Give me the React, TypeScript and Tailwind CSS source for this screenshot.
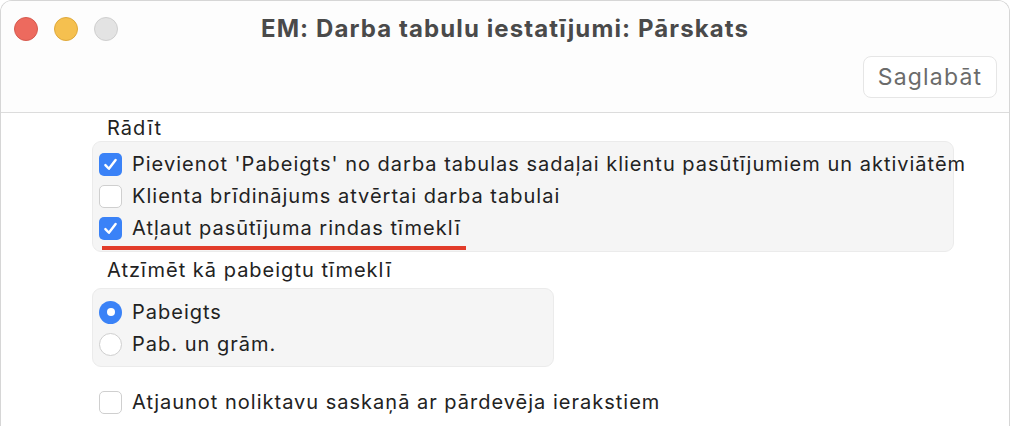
import React from "react";

const Check = ({ checked }: { checked: boolean }) =>
  checked ? (
    <div className="w-[23px] h-[23px] rounded-[5px] bg-[#3a82f7] flex items-center justify-center shrink-0">
      <svg width="17" height="17" viewBox="0 0 16 16" fill="none">
        <path d="M3.2 8.6 L6.5 12 L12.8 3.8" stroke="white" strokeWidth="2.3" strokeLinecap="round" strokeLinejoin="round" />
      </svg>
    </div>
  ) : (
    <div className="w-[23px] h-[23px] rounded-[5px] bg-white border border-[#cfcfcf] shrink-0" />
  );

const Radio = ({ checked }: { checked: boolean }) =>
  checked ? (
    <div className="w-[23px] h-[23px] rounded-full bg-[#3a82f7] flex items-center justify-center shrink-0">
      <div className="w-[8px] h-[8px] rounded-full bg-white" />
    </div>
  ) : (
    <div className="w-[23px] h-[23px] rounded-full bg-white border border-[#cfcfcf] shrink-0" />
  );

const Row = ({ children, control }: { children: React.ReactNode; control: React.ReactNode }) => (
  <div className="h-[32px] flex items-center gap-[10px]">
    {control}
    <span className="whitespace-nowrap">{children}</span>
  </div>
);

export default function App() {
  return (
    <div
      className="w-[1010px] h-[426px] bg-white overflow-hidden rounded-t-[12px] border-t border-l border-r border-[#d6d6d6] text-[#222222]"
      style={{ fontFamily: "Inter, 'Noto Sans', sans-serif" }}
    >
      <div className="h-[112px] bg-[#fdfdfd] border-b border-[#dcdcdc] flex flex-col">
        <div className="h-[55px] flex items-center relative">
          <div className="flex gap-[16px] pl-[13px]">
            <div className="w-[24px] h-[24px] rounded-full bg-[#ed6a5e] border border-[#d65a4f]" />
            <div className="w-[24px] h-[24px] rounded-full bg-[#f5c04f] border border-[#dfa93b]" />
            <div className="w-[24px] h-[24px] rounded-full bg-[#e3e3e3] border border-[#cfcfcf]" />
          </div>
          <div className="absolute inset-0 flex items-center justify-center pointer-events-none">
            <span className="text-[24px] font-bold text-[#4a4a4a] tracking-[1.1px]">EM: Darba tabulu iestatījumi: Pārskats</span>
          </div>
        </div>
        <div className="flex justify-end pr-[12px]">
          <div className="h-[42px] w-[134px] rounded-[8px] border border-[#e6e6e6] bg-white flex items-center justify-center text-[23px] tracking-[1.2px] text-[#6b6b6b]">
            Saglabāt
          </div>
        </div>
      </div>

      <div className="pl-[91px] text-[20px] tracking-[1px] leading-none">
        <div className="pl-[15px] h-[28px] pt-[2px] flex items-center">Rādīt</div>
        <div className="w-[862px] rounded-[9px] bg-[#f5f5f5] border border-[#ebebeb] px-[6px] pt-[6px] pb-[7px] relative">
          <Row control={<Check checked />}>Pievienot 'Pabeigts' no darba tabulas sadaļai klientu pasūtījumiem un aktiviātēm</Row>
          <Row control={<Check checked={false} />}>Klienta brīdinājums atvērtai darba tabulai</Row>
          <Row control={<Check checked />}>Atļaut pasūtījuma rindas tīmeklī</Row>
          <div className="absolute left-[9px] top-[104px] w-[364px] h-[4px] bg-[#e23c2a]" />
        </div>
        <div className="pl-[15px] h-[36px] flex items-center">Atzīmēt kā pabeigtu tīmeklī</div>
        <div className="w-[462px] rounded-[9px] bg-[#f5f5f5] border border-[#ebebeb] px-[6px] pt-[7px] pb-[6px]">
          <Row control={<Radio checked />}>Pabeigts</Row>
          <Row control={<Radio checked={false} />}>Pab. un grām.</Row>
        </div>
        <div className="pl-[7px] pt-[19px]">
          <Row control={<Check checked={false} />}>Atjaunot noliktavu saskaņā ar pārdevēja ierakstiem</Row>
        </div>
      </div>
    </div>
  );
}
